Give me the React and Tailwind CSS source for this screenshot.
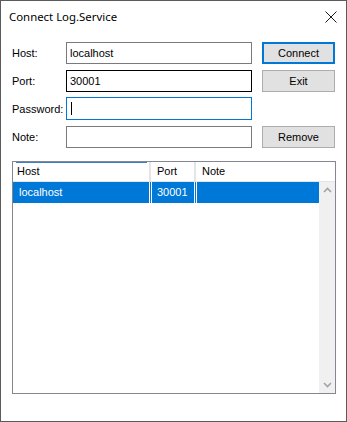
export default function App() {
  const body = { fontFamily: '"Liberation Sans", Arial, sans-serif' };
  const title = { fontFamily: '"Noto Sans", "Open Sans", sans-serif' };
  return (
    <div className="w-[347px] h-[422px] bg-white border border-[#5b5b5b] flex flex-col text-[11px] text-black" style={body}>
      {/* title bar */}
      <div className="h-[31px] flex items-center justify-between pl-[8px] pr-[9px]">
        <span className="text-[11.4px] leading-none" style={title}>Connect Log.Service</span>
        <svg width="12" height="12" viewBox="0 0 12 12" className="mt-[1px]">
          <path d="M0.5 0.5 L11.5 11.5 M11.5 0.5 L0.5 11.5" stroke="#1a1a1a" strokeWidth="1" />
        </svg>
      </div>
      {/* form */}
      <div className="flex pl-[11px] pt-[10px]">
        <div className="flex flex-col w-[54px]">
          <div className="h-[22px] flex items-center pt-[1px]">Host:</div>
          <div className="h-[22px] mt-[6px] flex items-center pt-[1px]">Port:</div>
          <div className="h-[22px] mt-[6px] flex items-center pt-[1px]">Password:</div>
          <div className="h-[22px] mt-[6px] flex items-center pt-[1px]">Note:</div>
        </div>
        <div className="flex flex-col w-[186px]">
          <div className="h-[22px] border border-[#7a7a7a] flex items-center pl-[3px]">localhost</div>
          <div className="h-[22px] mt-[6px] border border-[#000] flex items-center pl-[3px]">30001</div>
          <div className="h-[23px] mt-[5px] border border-[#0078d7] flex items-center pl-[4px]">
            <div className="w-px h-[13px] bg-black" />
          </div>
          <div className="h-[22px] mt-[6px] border border-[#7a7a7a]" />
        </div>
        <div className="flex flex-col w-[73px] ml-[10px]">
          <div className="h-[22px] border-2 border-[#0078d7] bg-[#e1e1e1] flex items-center justify-center">Connect</div>
          <div className="h-[22px] mt-[6px] border border-[#adadad] bg-[#e1e1e1] flex items-center justify-center">Exit</div>
          <div className="h-[22px] mt-[34px] border border-[#adadad] bg-[#e1e1e1] flex items-center justify-center">Remove</div>
        </div>
      </div>
      {/* list view */}
      <div className="ml-[11px] mt-[13px] w-[324px] h-[233px] border border-[#828790] flex flex-col relative">
        <div className="h-[20px] flex border-b border-[#e5e5e5]">
          <div className="w-[137px] relative flex items-center pl-[4px] border-r border-[#e5e5e5]">
            <div className="absolute top-0 left-[3px] right-[2px] h-px bg-[#3d7ec4]" />
            Host
          </div>
          <div className="w-[45px] flex items-center pl-[6px] border-l border-r border-[#e5e5e5]">Port</div>
          <div className="flex-1 flex items-center pl-[6px] border-l border-[#e5e5e5]">Note</div>
        </div>
        <div className="flex flex-1">
          <div className="flex-1 flex flex-col">
            <div className="h-[21px] flex bg-[#0078d7] text-white">
              <div className="w-[136px] flex items-center pl-[6px]">localhost</div>
              <div className="w-px bg-white" />
              <div className="w-px" />
              <div className="w-px bg-white" />
              <div className="w-[42px] flex items-center pl-[5px]">30001</div>
              <div className="w-px bg-white" />
              <div className="w-px" />
              <div className="w-px bg-white" />
              <div className="flex-1" />
            </div>
          </div>
          <div className="w-[16px] bg-[#f0f0f0] flex flex-col justify-between items-center py-[5px]">
            <svg width="9" height="6" viewBox="0 0 9 6">
              <path d="M1 5 L4.5 1.5 L8 5" stroke="#a3a3a3" strokeWidth="1.6" fill="none" />
            </svg>
            <svg width="9" height="6" viewBox="0 0 9 6">
              <path d="M1 1 L4.5 4.5 L8 1" stroke="#a3a3a3" strokeWidth="1.6" fill="none" />
            </svg>
          </div>
        </div>
      </div>
    </div>
  );
}
